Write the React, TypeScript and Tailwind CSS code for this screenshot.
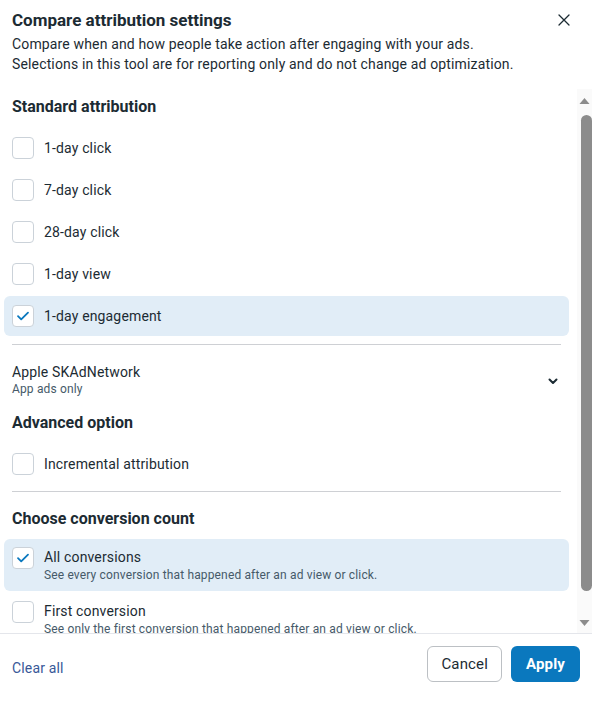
import React from "react";

function Checkbox({ checked }: { checked?: boolean }) {
  return (
    <div className="flex h-[22px] w-[22px] shrink-0 items-center justify-center rounded-[4px] border border-[#cbd2d9] bg-white">
      {checked && (
        <svg width="14" height="14" viewBox="0 0 14 14" fill="none">
          <path d="M2 7.2l3.2 3.2L12 3.6" stroke="#0a78be" strokeWidth="1.8" strokeLinecap="round" strokeLinejoin="round" />
        </svg>
      )}
    </div>
  );
}

function OptionRow({ label, checked }: { label: string; checked?: boolean }) {
  return (
    <div className={`flex h-10 items-center gap-[10px] rounded-[6px] px-2 ${checked ? "bg-[#e1edf7]" : ""}`}>
      <Checkbox checked={checked} />
      <span className="text-[14px] leading-5 text-[#1c2b33]">{label}</span>
    </div>
  );
}

function DetailRow({ label, detail, checked }: { label: string; detail: string; checked?: boolean }) {
  return (
    <div className={`flex items-start gap-[10px] rounded-[6px] px-2 py-2 ${checked ? "bg-[#e1edf7]" : ""}`}>
      <Checkbox checked={checked} />
      <div className="flex flex-col">
        <span className="text-[14px] leading-5 text-[#1c2b33]">{label}</span>
        <span className="text-[12px] leading-4 text-[#465a69]">{detail}</span>
      </div>
    </div>
  );
}

function Heading({ children }: { children: React.ReactNode }) {
  return <h3 className="px-2 text-[16px] font-bold leading-5 tracking-normal text-[#1c2b33]">{children}</h3>;
}

function Scrollbar() {
  return (
    <div className="flex w-[15px] shrink-0 flex-col items-center bg-[#fafafa] pt-[8px] pb-[6px]">
      <svg width="11" height="8" viewBox="0 0 11 8">
        <path d="M5.5 1L10.5 7H0.5Z" fill="#8c8c8c" />
      </svg>
      <div className="mt-[10px] mb-[28px] ml-[4px] w-[11px] flex-1 rounded-full bg-[#8c8c8c]" />
      <svg width="11" height="8" viewBox="0 0 11 8">
        <path d="M0.5 1H10.5L5.5 7Z" fill="#8c8c8c" />
      </svg>
    </div>
  );
}

export default function App() {
  return (
    <div
      className="flex h-[702px] w-[592px] flex-col bg-white tracking-[0.15px] text-[#1c2b33]"
      style={{ fontFamily: "Roboto, 'Liberation Sans', sans-serif" }}
    >
      <div className="flex flex-col px-3 pt-[10px]">
        <div className="flex items-center justify-between">
          <h2 className="text-[17px] font-bold leading-5 tracking-normal">Compare attribution settings</h2>
          <button className="mr-[6px] flex h-5 w-5 items-center justify-center">
            <svg width="12" height="12" viewBox="0 0 12 12">
              <path d="M1 1l10 10M11 1L1 11" stroke="#1c2b33" strokeWidth="1.3" strokeLinecap="round" />
            </svg>
          </button>
        </div>
        <p className="mt-1 text-[14px] leading-5">
          Compare when and how people take action after engaging with your ads.
          <br />
          Selections in this tool are for reporting only and do not change ad optimization.
        </p>
      </div>

      <div className="mt-[15px] flex min-h-0 flex-1">
        <div className="flex min-w-0 flex-1 flex-col overflow-hidden pl-1 pr-2 pt-2">
          <Heading>Standard attribution</Heading>
          <div className="mt-[11px] flex flex-col gap-[2px]">
            <OptionRow label="1-day click" />
            <OptionRow label="7-day click" />
            <OptionRow label="28-day click" />
            <OptionRow label="1-day view" />
            <OptionRow label="1-day engagement" checked />
          </div>
          <div className="mx-2 mt-[8px] border-t border-[#ced0d4]" />

          <div className="mt-[18px] flex items-center justify-between px-2">
            <div className="flex flex-col">
              <span className="text-[14px] leading-[18px]">Apple SKAdNetwork</span>
              <span className="text-[12px] leading-4 text-[#465a69]">App ads only</span>
            </div>
            <svg className="mr-[2px] mt-[2px]" width="12" height="12" viewBox="0 0 12 12">
              <path d="M2.5 4.5L6 8l3.5-3.5" stroke="#1c2b33" strokeWidth="2" fill="none" strokeLinecap="round" strokeLinejoin="round" />
            </svg>
          </div>

          <div className="mt-4">
            <Heading>Advanced option</Heading>
          </div>
          <div className="mt-[11px]">
            <OptionRow label="Incremental attribution" />
          </div>
          <div className="mx-2 mt-[7px] border-t border-[#ced0d4]" />

          <div className="mt-[17px]">
            <Heading>Choose conversion count</Heading>
          </div>
          <div className="mt-[10px] flex flex-col gap-[2px]">
            <DetailRow label="All conversions" detail="See every conversion that happened after an ad view or click." checked />
            <DetailRow label="First conversion" detail="See only the first conversion that happened after an ad view or click." />
          </div>
        </div>
        <Scrollbar />
      </div>

      <div className="flex h-[69px] shrink-0 items-start justify-between border-t border-[#e4e6eb] px-3 pt-3">
        <button className="mt-3 text-[14px] leading-5 text-[#385898]">Clear all</button>
        <div className="flex gap-[9px]">
          <button className="h-9 rounded-[6px] border border-[#bcc0c4] px-[13px] text-[15px] text-[#1c2b33]">Cancel</button>
          <button className="h-9 rounded-[6px] bg-[#0a78be] px-[15px] text-[15px] font-bold text-white">Apply</button>
        </div>
      </div>
    </div>
  );
}
